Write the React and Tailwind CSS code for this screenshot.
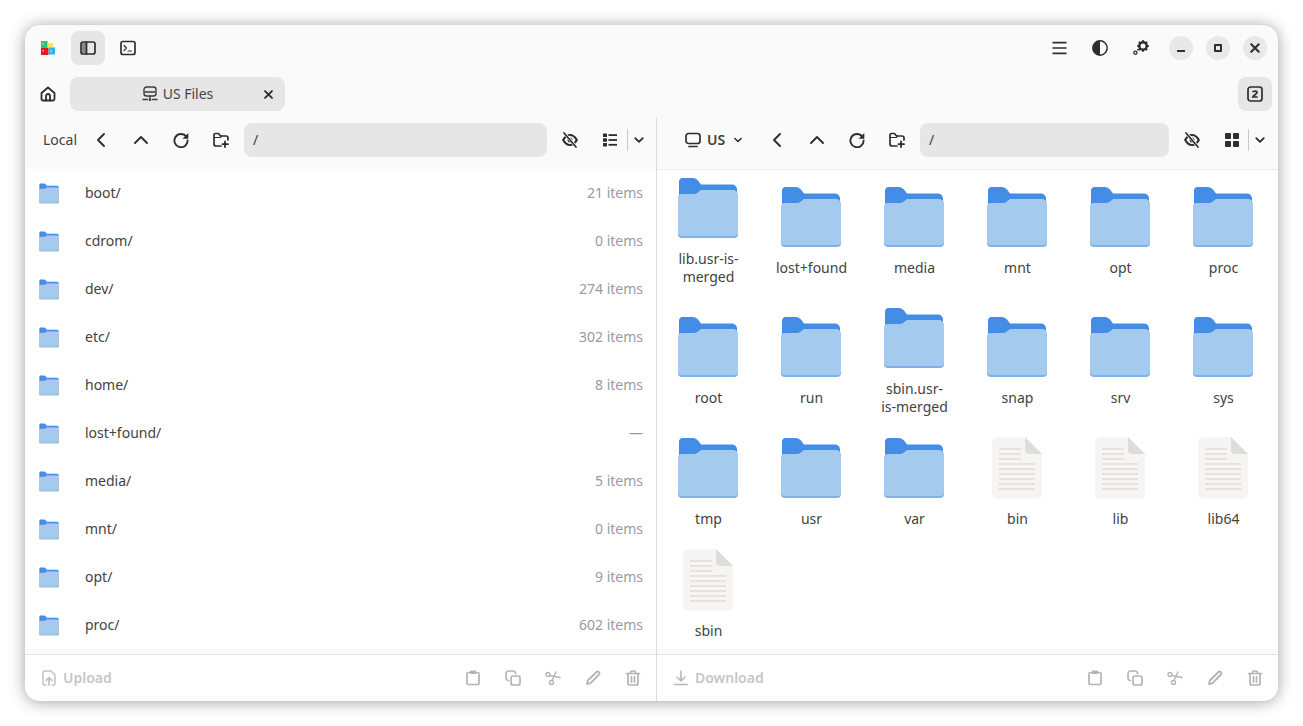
import React from 'react';

const Ico = ({ size = 16, className = '', strokeWidth = 1.5, children }) => (
  <svg width={size} height={size} viewBox="0 0 16 16" fill="none" stroke="currentColor" strokeWidth={strokeWidth} strokeLinecap="round" strokeLinejoin="round" className={className}>
    {children}
  </svg>
);

const Logo = () => (
  <svg width="16" height="16" viewBox="0 0 16 16">
    <rect x="1" y="1" width="6.5" height="7" fill="#2ec27e" />
    <rect x="8" y="3" width="5" height="4.500" fill="#f6e05e" />
    <rect x="1" y="8" width="7.500" height="7" fill="#e01b24" />
    <rect x="8.500" y="7.500" width="6.500" height="7" fill="#33b5e5" />
    <rect x="2.500" y="3" width="1" height="2" fill="#b8f0d0" />
    <rect x="2.500" y="10" width="1.500" height="1.500" fill="#f8b0b0" />
    <rect x="10.500" y="10" width="1" height="2" fill="#c0e8f8" />
  </svg>
);

const SidebarIcon = () => (
  <Ico strokeWidth={1.7}>
    <rect x="1" y="2" width="14" height="12" rx="2" />
    <path d="M2 3h4v10H2z" fill="currentColor" stroke="none" opacity="0.5" />
    <path d="M6.500 2v12" />
  </Ico>
);
const TerminalIcon = () => (
  <Ico strokeWidth={1.7}>
    <rect x="1" y="1.500" width="14" height="13" rx="2" />
    <path d="M4 5.500 6.500 8 4 10.500M8 11h3.500" strokeWidth="1.200" />
  </Ico>
);
const HomeIcon = () => (
  <Ico strokeWidth={1.8}>
    <path d="M1.500 7 8 1.500 14.500 7v6a1.500 1.500 0 0 1-1.500 1.500H3A1.500 1.500 0 0 1 1.500 13z" />
    <path d="M6 14.500V10a2 2 0 0 1 4 0v4.500" />
  </Ico>
);
const ServerIcon = () => (
  <Ico className="text-[#3d3d3d]" strokeWidth={1.4}>
    <rect x="2" y="1" width="12" height="9" rx="2.500" />
    <path d="M3 6h10M8 10v3.500M1 13.500h4.500M10.500 13.500H15" />
    <circle cx="8" cy="13.800" r="1.300" fill="currentColor" stroke="none" />
  </Ico>
);
const CloseIcon = ({ size = 12 }) => (
  <Ico size={size} strokeWidth={2.8}>
    <path d="m3 3 10 10M13 3 3 13" />
  </Ico>
);
const BackIcon = () => <Ico strokeWidth={1.9}><path d="M11 2 5 8l6 6" /></Ico>;
const UpIcon = () => <Ico strokeWidth={1.9}><path d="m2 11 6-6 6 6" /></Ico>;
const RefreshIcon = () => (
  <Ico strokeWidth={1.9}>
    <path d="M13.300 4.700A6.600 6.600 0 1 0 14.600 8.500" />
    <path d="M15.300 1v5.700H9.600z" fill="currentColor" stroke="none" />
  </Ico>
);
const NewFolderIcon = () => (
  <Ico strokeWidth={1.7}>
    <path d="M8 14H3a2 2 0 0 1-2-2V3a1.500 1.500 0 0 1 1.500-1.500H5.500L7.500 4H13a2 2 0 0 1 2 2v2" />
    <path d="M1.500 5.500h6l1-1.500" strokeWidth="1.200" />
    <path d="M12 9.500v5.500M9.500 12.200h5.500" strokeWidth="1.800" />
  </Ico>
);
const EyeOffIcon = () => (
  <Ico>
    <path d="M1.200 8c2-3.500 4.100-5 6.800-5s4.800 1.500 6.800 5c-2 3.500-4.100 5-6.800 5s-4.800-1.500-6.800-5z" strokeWidth="2.200" />
    <circle cx="8" cy="8" r="2.500" fill="currentColor" stroke="none" />
    <path d="m2.500 1.200 11.500 13.600" stroke="#fafafa" strokeWidth="3" />
    <path d="m2 1 12 14" strokeWidth="1.700" />
  </Ico>
);
const ListIcon = () => (
  <svg width="16" height="16" viewBox="0 0 16 16" fill="currentColor">
    <rect x="1" y="1.500" width="4" height="3.500" rx="0.500" />
    <rect x="1" y="6.300" width="4" height="3.500" rx="0.500" />
    <rect x="1" y="11" width="4" height="3.500" rx="0.500" />
    <rect x="6.500" y="2.200" width="8.500" height="1.800" />
    <rect x="6.500" y="7.100" width="8.500" height="1.800" />
    <rect x="6.500" y="11.900" width="8.500" height="1.800" />
  </svg>
);
const GridIcon = () => (
  <svg width="16" height="16" viewBox="0 0 16 16" fill="currentColor">
    <rect x="1" y="1" width="6" height="6" rx="0.800" />
    <rect x="9" y="1" width="6" height="6" rx="0.800" />
    <rect x="1" y="9" width="6" height="6" rx="0.800" />
    <rect x="9" y="9" width="6" height="6" rx="0.800" />
  </svg>
);
const ChevronIcon = ({ size = 12 }) => (
  <Ico size={size} strokeWidth={2.4}><path d="m3 5.500 5 5 5-5" /></Ico>
);
const MonitorIcon = () => (
  <Ico strokeWidth={1.7}>
    <rect x="1" y="1.500" width="14" height="10" rx="2.500" />
    <path d="M4 14.500h8" />
  </Ico>
);
const MenuIcon = () => (
  <Ico strokeWidth={1.7}><path d="M.500 2.700h14M.500 8h14M.500 13.300h14" strokeLinecap="butt" /></Ico>
);
const ContrastIcon = () => (
  <svg width="16" height="16" viewBox="0 0 16 16">
    <circle cx="8" cy="8" r="7.200" fill="none" stroke="currentColor" strokeWidth="1.500" />
    <path d="M8 .800a7.200 7.200 0 0 0 0 14.400z" fill="currentColor" />
  </svg>
);
const GearIcon = () => (
  <svg width="16" height="16" viewBox="0 0 16 16" className="translate-x-[1px]">
    <circle cx="10" cy="6" r="3.700" fill="none" stroke="currentColor" strokeWidth="2.400" />
    <path d="M10 .200v2M10 9.800v2M4.200 6h2M13.800 6h2M5.900 1.900l1.400 1.400M12.700 8.700l1.400 1.400M14.100 1.900l-1.400 1.400M7.300 8.700l-1.400 1.400" stroke="currentColor" strokeWidth="2" />
    <circle cx="2.400" cy="12.700" r="1.600" fill="none" stroke="currentColor" strokeWidth="1.300" />
    <circle cx="5" cy="9.700" r="0.900" fill="currentColor" />
  </svg>
);
const TabsIcon = () => (
  <svg width="16" height="16" viewBox="0 0 16 16" fill="none" stroke="currentColor">
    <rect x="1" y="1" width="14" height="14" rx="2.500" strokeWidth="1.700" />
    <path d="M5.800 6.200C5.900 4.800 10 4.500 10 6.500c0 1.500-3.800 2.800-4.200 4.500H10.500" strokeWidth="1.700" />
  </svg>
);
const UploadIcon = () => (
  <Ico>
    <path d="M5 15H3.500A1.500 1.500 0 0 1 2 13.500v-11A1.500 1.500 0 0 1 3.500 1H10l4 4v8.500a1.500 1.500 0 0 1-1.500 1.500H11" />
    <path d="M8 15V8M5 10.500 8 7.500l3 3" strokeWidth="1.700" />
  </Ico>
);
const DownloadIcon = () => (
  <Ico strokeWidth={1.6}>
    <path d="M8 1v9.500M4 7l4 4 4-4M1.500 14.500h13" />
  </Ico>
);
const PasteIcon = () => (
  <Ico strokeWidth={1.7}>
    <path d="M5 2.500H3.500a1.500 1.500 0 0 0-1.500 1.500v9a1.500 1.500 0 0 0 1.500 1.500h9a1.500 1.500 0 0 0 1.500-1.500V4a1.500 1.500 0 0 0-1.500-1.500H11" />
    <rect x="5" y="0.500" width="6" height="3.500" fill="currentColor" stroke="none" rx="0.500" />
  </Ico>
);
const CopyIcon = () => (
  <Ico strokeWidth={1.7}>
    <rect x="6" y="6" width="9" height="9" rx="2" />
    <path d="M3.500 10.500A2.500 2.500 0 0 1 1 8V3.500A2.500 2.500 0 0 1 3.500 1H8a2.500 2.500 0 0 1 2.500 2.500" />
  </Ico>
);
const CutIcon = () => (
  <Ico strokeWidth={1.400}>
    <circle cx="3" cy="4.500" r="2" />
    <circle cx="6.500" cy="12.500" r="2" />
    <path d="M5 5.500 15 7.500M7 10.500 11 2" />
  </Ico>
);
const PencilIcon = () => (
  <Ico strokeWidth={1.8}>
    <path d="M2 14l.8-3.500L11.500 2a1.500 1.500 0 0 1 2.200 0l.300.300a1.500 1.500 0 0 1 0 2.200L5.500 13.200z" />
  </Ico>
);
const TrashIcon = () => (
  <Ico strokeWidth={1.7}>
    <path d="M1.500 3.500h13M5.500 3V2.500a1.500 1.500 0 0 1 1.500-1.500h2a1.500 1.500 0 0 1 1.500 1.500V3" />
    <path d="M3 3.500V13a2 2 0 0 0 2 2h6a2 2 0 0 0 2-2V3.500M6.500 6.500v5.500M9.500 6.500v5.500" />
  </Ico>
);

const FolderIcon = ({ width = 60, height = 60 }) => (
  <svg width={width} height={height} viewBox="0 0 60 60">
    <path d="M4 0H15Q18 0 20 2.500L23 6.500H54a5 5 0 0 1 5 5V30H1V4a4 4 0 0 1 3-4z" fill="#438de6" />
    <path d="M4 17H16Q18.500 17 20.500 15L23 13H55a5 5 0 0 1 5 5V56a4 4 0 0 1-4 4H4a4 4 0 0 1-4-4V21a4 4 0 0 1 4-4z" fill="#7fb2ec" />
    <path d="M4 16H16Q18.500 16 20.500 14L23 12H55a5 5 0 0 1 5 5V54a4 4 0 0 1-4 4H4a4 4 0 0 1-4-4V20a4 4 0 0 1 4-4z" fill="#a4caee" />
  </svg>
);

const DocIcon = () => (
  <svg width="50" height="62" viewBox="0 0 50 62">
    <path d="M5 0H33L50 17V57a5 5 0 0 1-5 5H5a5 5 0 0 1-5-5V5a5 5 0 0 1 5-5z" fill="#f6f5f4" />
    <path d="M33 0L50 17H37a4 4 0 0 1-4-4z" fill="#deddda" />
    <path d="M7 12h22M7 17h22M7 22h22M7 27h36M7 32h36M7 37h36M7 42h36M7 47h36M7 52h36" stroke="#deddda" strokeWidth="1.600" />
  </svg>
);

const ToolBtn = ({ children, className = '' }) => (
  <button className={`w-10 h-[34px] flex items-center justify-center shrink-0 ${className}`}>{children}</button>
);

const listRows = [
  ['boot/', '21 items'],
  ['cdrom/', '0 items'],
  ['dev/', '274 items'],
  ['etc/', '302 items'],
  ['home/', '8 items'],
  ['lost+found/', '—'],
  ['media/', '5 items'],
  ['mnt/', '0 items'],
  ['opt/', '9 items'],
  ['proc/', '602 items'],
];

const gridItems = [
  ['lib.usr-is-merged', 'folder'],
  ['lost+found', 'folder'],
  ['media', 'folder'],
  ['mnt', 'folder'],
  ['opt', 'folder'],
  ['proc', 'folder'],
  ['root', 'folder'],
  ['run', 'folder'],
  ['sbin.usr-\nis-merged', 'folder'],
  ['snap', 'folder'],
  ['srv', 'folder'],
  ['sys', 'folder'],
  ['tmp', 'folder'],
  ['usr', 'folder'],
  ['var', 'folder'],
  ['bin', 'doc'],
  ['lib', 'doc'],
  ['lib64', 'doc'],
  ['sbin', 'doc'],
];

const FooterActions = () => (
  <div className="flex items-center text-[#b4b4b4]">
    <ToolBtn><PasteIcon /></ToolBtn>
    <ToolBtn><CopyIcon /></ToolBtn>
    <ToolBtn><CutIcon /></ToolBtn>
    <ToolBtn><PencilIcon /></ToolBtn>
    <ToolBtn><TrashIcon /></ToolBtn>
  </div>
);

const App = () => {
  return (
    <div className="w-[1303px] h-[726px] bg-white p-[25px] overflow-hidden font-['Noto_Sans',sans-serif] text-[14px] text-[#424242]">
      <div className="w-[1253px] h-[676px] bg-[#fafafa] rounded-[15px] overflow-hidden flex flex-col shadow-[0_1px_16px_rgba(0,0,0,0.38)]">
        {/* Title row */}
        <div className="h-[46px] shrink-0 flex items-center pl-[2px] pr-[11px] text-[#2e2e2e]">
          <div className="w-10 pl-[2px] flex items-center justify-center"><Logo /></div>
          <button className="ml-1 w-[34px] h-[34px] rounded-lg bg-[#e6e6e6] flex items-center justify-center"><SidebarIcon /></button>
          <button className="ml-1.5 w-[34px] h-[34px] flex items-center justify-center"><TerminalIcon /></button>
          <div className="ml-auto flex items-center">
            <ToolBtn><MenuIcon /></ToolBtn>
            <ToolBtn><ContrastIcon /></ToolBtn>
            <ToolBtn><GearIcon /></ToolBtn>
            <div className="ml-[9px] flex items-center gap-[13px]">
              <button className="w-6 h-6 rounded-full bg-[#e8e8e8] flex items-center justify-center">
                <span className="block w-2 h-0.5 bg-[#2e2e2e] mt-1.5" />
              </button>
              <button className="w-6 h-6 rounded-full bg-[#e8e8e8] flex items-center justify-center">
                <span className="block w-2 h-2 border-2 border-[#2e2e2e] rounded-[1px]" />
              </button>
              <button className="w-6 h-6 rounded-full bg-[#e8e8e8] flex items-center justify-center"><CloseIcon /></button>
            </div>
          </div>
        </div>

        {/* Tab row */}
        <div className="h-[46px] shrink-0 flex items-center pl-[6px] pr-[6px] text-[#2e2e2e]">
          <button className="w-[34px] h-[34px] flex items-center justify-center"><HomeIcon /></button>
          <div className="ml-[5px] w-[215px] h-[34px] rounded-lg bg-[#e6e6e6] flex items-center">
            <span className="w-[34px]" />
            <div className="flex-1 flex items-center justify-center gap-[5px]">
              <ServerIcon />
              <span className="text-[#444] pb-[2px]">US Files</span>
            </div>
            <span className="w-[34px] flex justify-center"><CloseIcon size={11} /></span>
          </div>
          <button className="ml-auto w-[34px] h-[34px] rounded-lg bg-[#e6e6e6] flex items-center justify-center"><TabsIcon /></button>
        </div>

        {/* Panes */}
        <div className="flex-1 flex min-h-0">
          {/* Left pane */}
          <div className="w-[632px] shrink-0 border-r border-[#dcdcdc] flex flex-col">
            <div className="h-[52px] shrink-0 flex items-center pl-[18px] pr-[6px] pb-[6px] text-[#2e2e2e]">
              <span className="w-[38px] text-[#424242] pb-[2px]">Local</span>
              <ToolBtn><BackIcon /></ToolBtn>
              <ToolBtn><UpIcon /></ToolBtn>
              <ToolBtn><RefreshIcon /></ToolBtn>
              <ToolBtn><NewFolderIcon /></ToolBtn>
              <div className="ml-[3px] flex-1 h-[34px] rounded-lg bg-[#e6e6e6] flex items-center px-[9px] pb-[2px] text-[#424242]">/</div>
              <ToolBtn className="ml-[3px]"><EyeOffIcon /></ToolBtn>
              <div className="w-[37px] pl-[3px] flex justify-center"><ListIcon /></div>
              <span className="w-px h-[22px] bg-[#c8c8c8]" />
              <div className="w-[22px] flex justify-center"><ChevronIcon /></div>
            </div>
            <div className="h-[480px] shrink-0 bg-white">
              {listRows.map(([name, count]) => (
                <div key={name} className="h-12 flex items-center pl-[14px] pr-[13px]">
                  <FolderIcon width={20} height={21} />
                  <span className="ml-[26px] pb-[2px]">{name}</span>
                  <span className="ml-auto pb-[2px] text-[#9a9a9a]">{count}</span>
                </div>
              ))}
            </div>
            <div className="flex-1 bg-[#fafafa]" />
            <div className="h-[47px] shrink-0 bg-white border-t border-[#e2e2e2] flex items-center pl-[16px] pr-[3px]">
              <span className="text-[#c2c2c2]"><UploadIcon /></span>
              <span className="ml-[6px] pb-[2px] font-semibold text-[#c6c6c6]">Upload</span>
              <div className="ml-auto"><FooterActions /></div>
            </div>
          </div>

          {/* Right pane */}
          <div className="flex-1 min-w-0 flex flex-col">
            <div className="h-[53px] shrink-0 flex items-center border-b border-[#ececec] pl-[25px] pr-[7px] pb-[6px] text-[#2e2e2e]">
              <button className="w-[75px] h-[34px] flex items-center pl-[3px]">
                <MonitorIcon />
                <span className="ml-[6px] pb-[2px] font-semibold text-[#424242]">US</span>
                <span className="ml-2"><ChevronIcon size={10} /></span>
              </button>
              <ToolBtn><BackIcon /></ToolBtn>
              <ToolBtn><UpIcon /></ToolBtn>
              <ToolBtn><RefreshIcon /></ToolBtn>
              <ToolBtn><NewFolderIcon /></ToolBtn>
              <div className="ml-[3px] flex-1 h-[34px] rounded-lg bg-[#e6e6e6] flex items-center px-[9px] pb-[2px] text-[#424242]">/</div>
              <ToolBtn className="ml-[3px]"><EyeOffIcon /></ToolBtn>
              <div className="w-9 pl-1 flex justify-center"><GridIcon /></div>
              <span className="w-px h-[22px] bg-[#c8c8c8]" />
              <div className="w-[22px] flex justify-center"><ChevronIcon /></div>
            </div>
            <div className="flex-1 min-h-0 bg-white overflow-hidden">
              <div className="grid grid-cols-[repeat(6,103px)] gap-y-[6px] items-center">
                {gridItems.map(([name, kind]) => (
                  <div key={name} className="flex flex-col items-center pt-[7px] pb-2 px-[15px]">
                    <div className="h-[62px] pr-[2px] flex items-center justify-center">
                      {kind === 'folder' ? <FolderIcon /> : <DocIcon />}
                    </div>
                    <div className="mt-[11px] text-center leading-[18px] whitespace-pre-line">{name}</div>
                  </div>
                ))}
              </div>
            </div>
            <div className="h-[5px] shrink-0 bg-[#fafafa]" />
            <div className="h-[47px] shrink-0 bg-white border-t border-[#e2e2e2] flex items-center pl-4 pr-[3px]">
              <span className="text-[#b8b8b8]"><DownloadIcon /></span>
              <span className="ml-[6px] pb-[2px] font-semibold text-[#c6c6c6]">Download</span>
              <div className="ml-auto"><FooterActions /></div>
            </div>
          </div>
        </div>
      </div>
    </div>
  );
};

export default App;
